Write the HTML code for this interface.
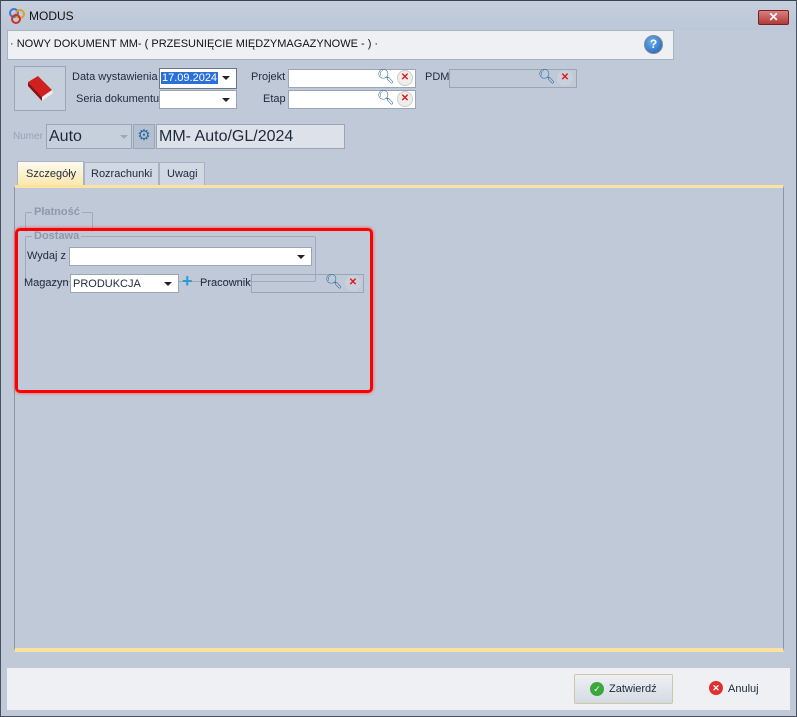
<!DOCTYPE html>
<html><head><meta charset="utf-8"><style>
*{box-sizing:border-box;margin:0;padding:0}
body{width:797px;height:717px;overflow:hidden;font-family:"Liberation Sans",sans-serif;font-size:11px;color:#1e2a3a;background:#bfc9d8;position:relative}
.win{position:absolute;left:0;top:0;width:797px;height:717px}
.abs{position:absolute}
.inp{position:absolute;background:#fff;border:1px solid #9aa6b6}
.dd:after{content:"";position:absolute;right:6px;top:7px;border:4px solid transparent;border-top:4px solid #222;border-bottom:0}
.lbl{position:absolute;font-size:11px;white-space:nowrap}
.x{position:absolute;width:16px;height:16px;border-radius:50%;background:#eee;border:1px solid #ccc;color:#e01818;font-weight:bold;font-size:10px;line-height:14px;text-align:center}
</style></head><body>
<div class="win">
<div class="abs" style="left:0;top:0;width:797px;height:717px;border:1px solid #4a5262;border-top-color:#3a4352"></div>
<div class="abs" style="left:1px;top:1px;width:795px;height:29px;background:linear-gradient(#c5cfdd,#bcc7d7)"></div>
<svg class="abs" style="left:8px;top:7px" width="18" height="18"><circle cx="6" cy="6" r="4" fill="none" stroke="#3a7ad0" stroke-width="2"/><circle cx="12" cy="7" r="4" fill="none" stroke="#e0a020" stroke-width="2"/><circle cx="8" cy="12" r="4" fill="none" stroke="#d03030" stroke-width="2"/></svg>
<div class="lbl" style="left:29px;top:9px;font-size:12px;color:#111">MODUS</div>
<div class="abs" style="left:758px;top:10px;width:31px;height:15px;background:linear-gradient(#d98080,#b03a3a);border:1px solid #7a2020;border-radius:2px;color:#fff;font-weight:bold;text-align:center;line-height:13px;font-size:12px">✕</div>
<div class="abs" style="left:7px;top:30px;width:667px;height:30px;background:#eef0f4;border:1px solid #a8b2c0"></div>
<div class="lbl" style="left:10px;top:38px;font-size:11px;color:#111">· NOWY DOKUMENT MM- ( PRZESUNIĘCIE MIĘDZYMAGAZYNOWE - ) ·</div>
<div class="abs" style="left:644px;top:35px;width:19px;height:19px;border-radius:50%;background:radial-gradient(circle at 40% 35%,#6ab0f0,#1a5cb0);border:1px solid #889;color:#fff;font-weight:bold;text-align:center;line-height:17px;font-size:12px">?</div>
<div class="abs" style="left:14px;top:66px;width:52px;height:45px;border:1px solid #9aa6b6;background:#c6cfdc"></div>
<svg class="abs" style="left:22px;top:70px" width="36" height="36"><path d="M6 12 L16 6 L30 20 L20 27 Z" fill="#d02020"/><path d="M6 12 L20 27 L20 31 L6 16 Z" fill="#901010"/><path d="M20 27 L30 20 L31 23 L20 31 Z" fill="#eee"/></svg>
<div class="lbl" style="left:72px;top:71px">Data wystawienia</div>
<div class="inp dd" style="left:159px;top:68px;width:78px;height:21px;border-color:#6a7688"><span style="background:#2b6fd8;color:#fff;margin:3px 1px;display:inline-block;padding:0 1px;font-size:11px;line-height:12px">17.09.2024</span></div>
<div class="lbl" style="left:76px;top:93px">Seria dokumentu</div>
<div class="inp dd" style="left:159px;top:90px;width:78px;height:19px"></div>
<div class="lbl" style="left:251px;top:71px">Projekt</div>
<div class="inp" style="left:288px;top:69px;width:128px;height:19px"></div>
<div class="lbl" style="left:263px;top:93px">Etap</div>
<div class="inp" style="left:288px;top:90px;width:128px;height:19px"></div>
<div class="lbl" style="left:425px;top:71px">PDM</div>
<div class="abs" style="left:449px;top:69px;width:128px;height:19px;border:1px solid #9aa6b6;background:#bfc9d8"></div>
<div class="lbl" style="left:377px;top:68px;color:#2a6a9a;font-size:14px">🔍︎</div><div class="x" style="left:397px;top:70px">✕</div>
<div class="lbl" style="left:377px;top:89px;color:#2a6a9a;font-size:14px">🔍︎</div><div class="x" style="left:397px;top:91px">✕</div>
<div class="lbl" style="left:538px;top:68px;color:#2a6a9a;font-size:14px">🔍︎</div><div class="x" style="left:557px;top:70px;background:#c8d0dc;border-color:#c8d0dc">✕</div>
<div class="lbl" style="left:13px;top:131px;color:#98a2b2;font-size:10px">Numer</div>
<div class="abs" style="left:46px;top:124px;width:86px;height:25px;border:1px solid #9aa6b6;font-size:16px;padding:3px 2px;background:#c6cfdc">Auto</div>
<div class="abs" style="left:120px;top:135px;border:4px solid transparent;border-top-color:#a0a8b4"></div>
<div class="abs" style="left:133px;top:124px;width:22px;height:25px;border:1px solid #9aa6b6;background:#b4c0d0;color:#2a6a9a;text-align:center;font-size:15px;line-height:22px">⚙</div>
<div class="abs" style="left:156px;top:124px;width:189px;height:25px;border:1px solid #9aa6b6;background:#dde2ea;font-size:16px;padding:3px 2px">MM- Auto/GL/2024</div>
<div class="abs" style="left:17px;top:161px;width:67px;height:26px;border:1px solid #a8b2c0;border-bottom:0;background:linear-gradient(#fdfaf0,#fbe6a8);padding:6px 0 0 8px">Szczegóły</div>
<div class="abs" style="left:84px;top:162px;width:75px;height:24px;border:1px solid #a8b2c0;background:#d0d8e4;padding:5px 0 0 6px">Rozrachunki</div>
<div class="abs" style="left:159px;top:162px;width:46px;height:24px;border:1px solid #a8b2c0;background:#d0d8e4;padding:5px 0 0 7px">Uwagi</div>
<div class="abs" style="left:14px;top:185px;width:770px;height:467px;border:1px solid #8a96a8;border-top:3px solid #fbe2a0;border-bottom:4px solid #fbe0a0;background:#bfc9d8"></div>
<div class="abs" style="left:25px;top:212px;width:68px;height:20px;border:1px solid #a0aaba;border-bottom:0;border-radius:2px"></div>
<div class="lbl" style="left:32px;top:206px;background:#bfc9d8;padding:0 2px;color:#8e98a8;font-weight:bold">Płatność</div>
<div class="abs" style="left:25px;top:236px;width:291px;height:46px;border:1px solid #a0aaba;border-radius:2px"></div>
<div class="lbl" style="left:32px;top:230px;background:#bfc9d8;padding:0 2px;color:#8e98a8;font-weight:bold">Dostawa</div>
<div class="lbl" style="left:27px;top:250px">Wydaj z</div>
<div class="inp dd" style="left:69px;top:247px;width:243px;height:19px"></div>
<div class="lbl" style="left:24px;top:277px">Magazyn</div>
<div class="inp dd" style="left:70px;top:274px;width:109px;height:19px;padding:3px 2px">PRODUKCJA</div>
<div class="lbl" style="left:182px;top:271px;color:#2a9ad8;font-size:18px;font-weight:bold">+</div>
<div class="lbl" style="left:200px;top:277px">Pracownik</div>
<div class="abs" style="left:251px;top:274px;width:113px;height:19px;border:1px solid #9aa6b6"></div>
<div class="lbl" style="left:325px;top:273px;color:#2a6a9a;font-size:14px">🔍︎</div><div class="x" style="left:345px;top:275px;background:#c8d0dc;border-color:#c8d0dc">✕</div>
<div class="abs" style="left:15px;top:228px;width:358px;height:165px;border:3px solid #f00;border-radius:5px;box-shadow:0 0 3px #f44"></div>
<div class="abs" style="left:7px;top:668px;width:783px;height:42px;background:#eef0f4"></div>
<div class="abs" style="left:574px;top:674px;width:99px;height:30px;border:1px solid #cfc8a8;background:linear-gradient(#eef0f4,#d4dae4);border-radius:2px;padding:8px 0 0 34px">Zatwierdź</div>
<div class="abs" style="left:590px;top:682px;width:14px;height:14px;border-radius:50%;background:#3aa83a;color:#fff;font-size:9px;text-align:center;line-height:14px">✓</div>
<div class="abs" style="left:709px;top:681px;width:14px;height:14px;border-radius:50%;background:#e03030;color:#fff;font-size:9px;text-align:center;line-height:14px;font-weight:bold">✕</div>
<div class="lbl" style="left:728px;top:683px">Anuluj</div>
</div>
</body></html>
